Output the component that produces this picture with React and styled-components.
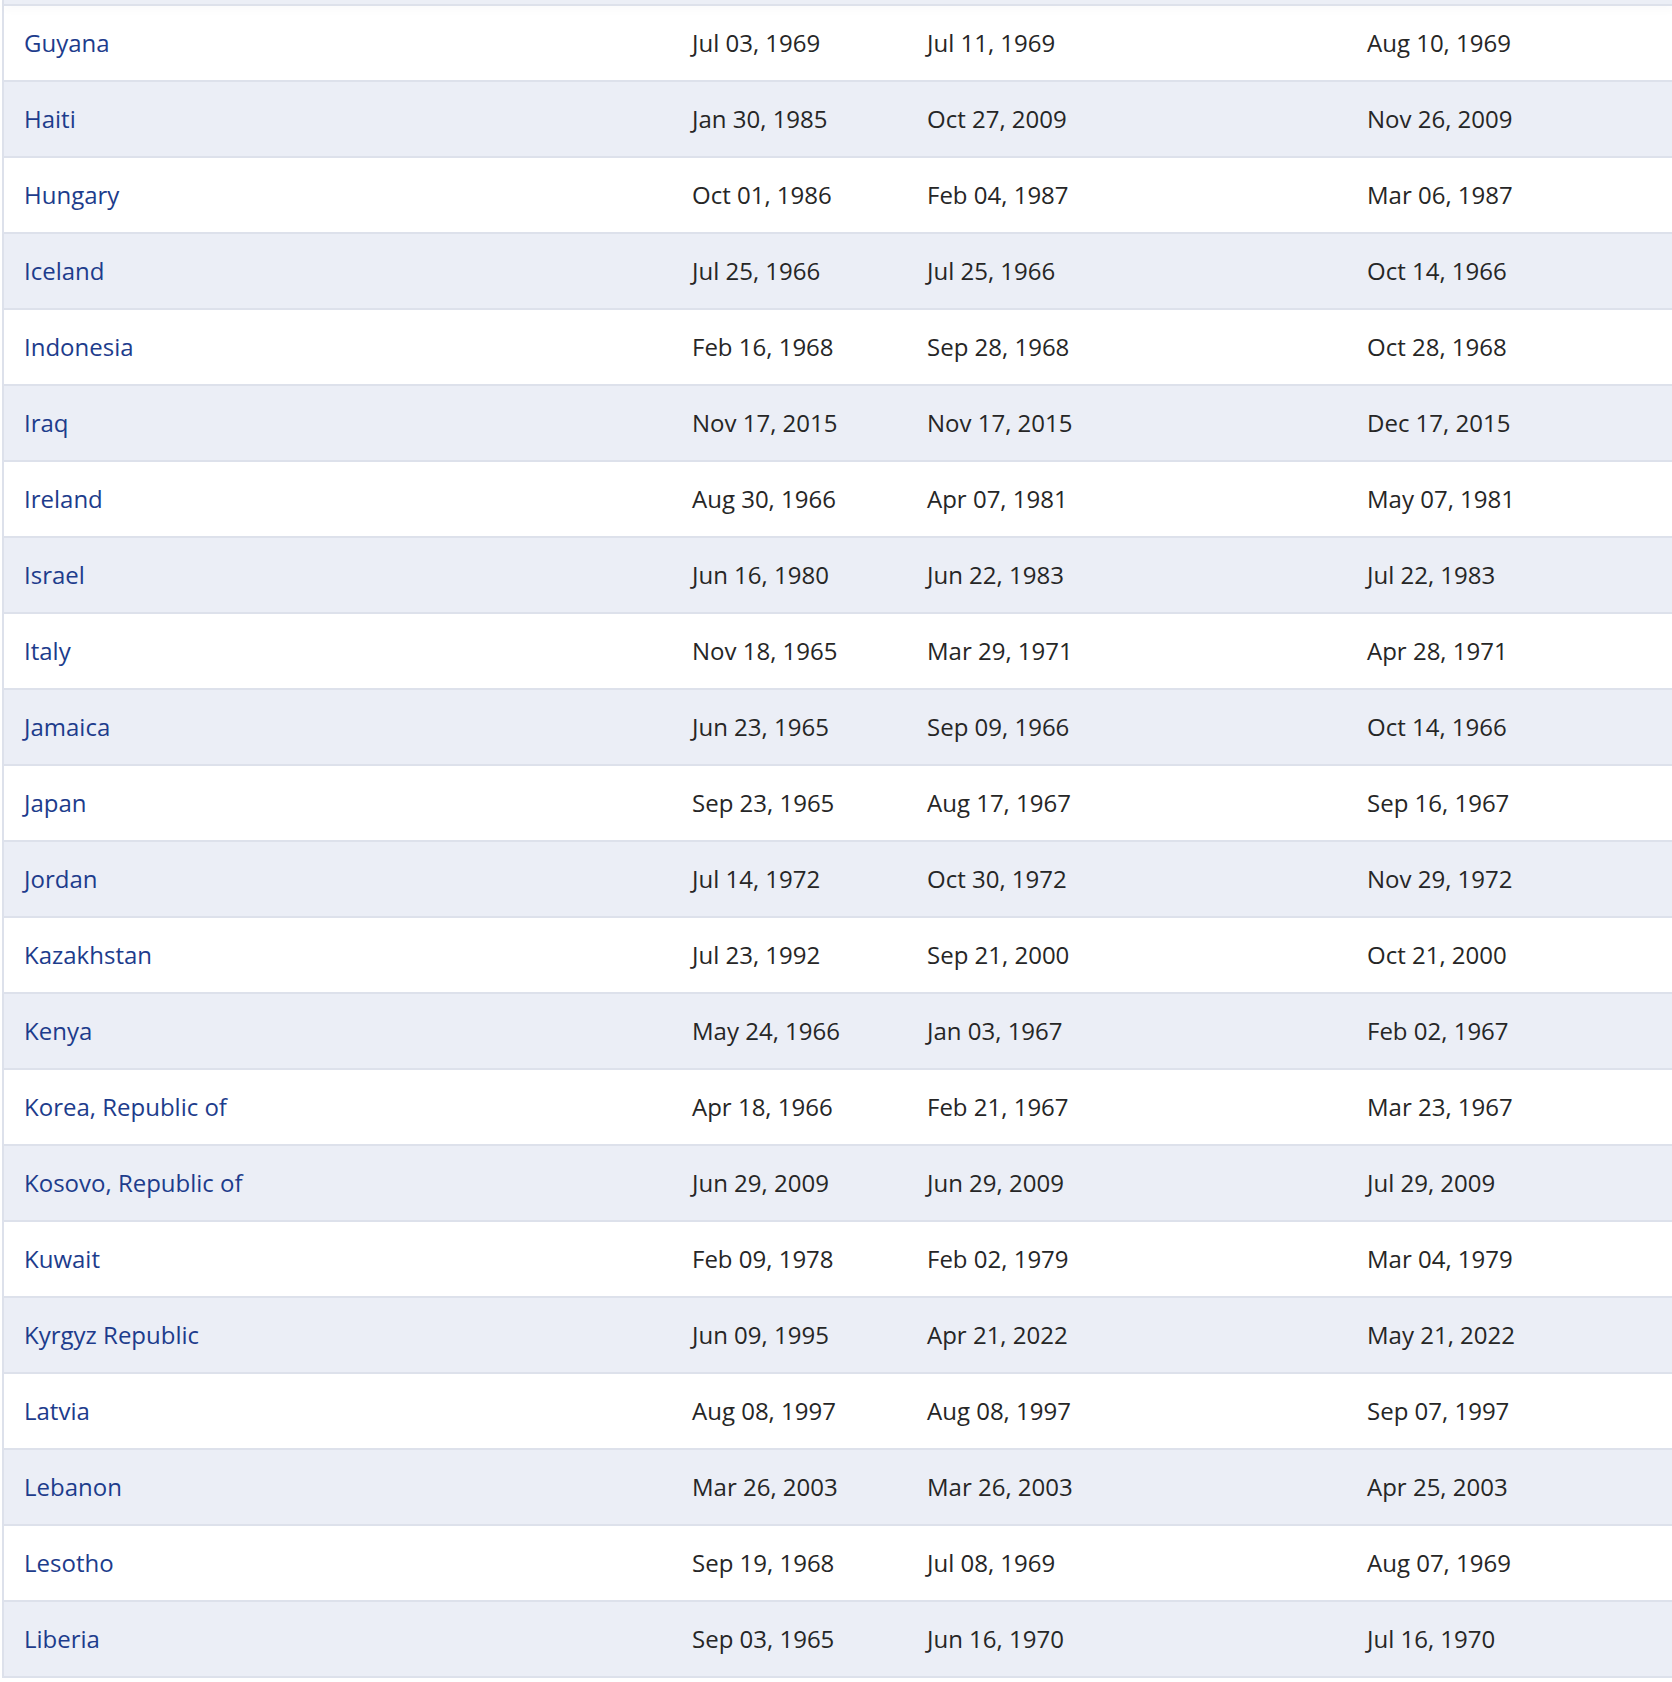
import React from 'react'
import styled, { createGlobalStyle } from 'styled-components'

const GlobalStyle = createGlobalStyle`
  body {
    margin: 0;
    background: #ffffff;
    font-family: 'Open Sans', 'Noto Sans', sans-serif;
  }
`

const borderColor = '#dde1eb'
const stripeColor = '#ebeef6'

const TableWrapper = styled.div`
  padding-left: 2px;
  overflow: hidden;
`

const Table = styled.div`
  border-left: 2px solid ${borderColor};
  width: 100%;
`

const ClippedRow = styled.div`
  height: 4px;
  background-color: ${stripeColor};
  border-bottom: 2px solid ${borderColor};
  box-shadow: 0 3px 10px rgba(30, 40, 80, 0.035);
  position: relative;
  z-index: 1;
`

const Row = styled.div`
  display: grid;
  grid-template-columns: 668px 235px 440px 1fr;
  align-items: center;
  height: 76px;
  padding-bottom: 1px;
  box-sizing: border-box;
  border-bottom: 2px solid ${borderColor};
  background-color: ${(props) => (props.$striped ? stripeColor : '#ffffff')};
`

const Cell = styled.div`
  padding-left: 20px;
  font-size: 24px;
  color: #262626;
  white-space: nowrap;
`

const CountryLink = styled.a`
  color: #1d3c8c;
  text-decoration: none;
  font-size: 24px;
`

const rows = [
  ['Guyana', 'Jul 03, 1969', 'Jul 11, 1969', 'Aug 10, 1969'],
  ['Haiti', 'Jan 30, 1985', 'Oct 27, 2009', 'Nov 26, 2009'],
  ['Hungary', 'Oct 01, 1986', 'Feb 04, 1987', 'Mar 06, 1987'],
  ['Iceland', 'Jul 25, 1966', 'Jul 25, 1966', 'Oct 14, 1966'],
  ['Indonesia', 'Feb 16, 1968', 'Sep 28, 1968', 'Oct 28, 1968'],
  ['Iraq', 'Nov 17, 2015', 'Nov 17, 2015', 'Dec 17, 2015'],
  ['Ireland', 'Aug 30, 1966', 'Apr 07, 1981', 'May 07, 1981'],
  ['Israel', 'Jun 16, 1980', 'Jun 22, 1983', 'Jul 22, 1983'],
  ['Italy', 'Nov 18, 1965', 'Mar 29, 1971', 'Apr 28, 1971'],
  ['Jamaica', 'Jun 23, 1965', 'Sep 09, 1966', 'Oct 14, 1966'],
  ['Japan', 'Sep 23, 1965', 'Aug 17, 1967', 'Sep 16, 1967'],
  ['Jordan', 'Jul 14, 1972', 'Oct 30, 1972', 'Nov 29, 1972'],
  ['Kazakhstan', 'Jul 23, 1992', 'Sep 21, 2000', 'Oct 21, 2000'],
  ['Kenya', 'May 24, 1966', 'Jan 03, 1967', 'Feb 02, 1967'],
  ['Korea, Republic of', 'Apr 18, 1966', 'Feb 21, 1967', 'Mar 23, 1967'],
  ['Kosovo, Republic of', 'Jun 29, 2009', 'Jun 29, 2009', 'Jul 29, 2009'],
  ['Kuwait', 'Feb 09, 1978', 'Feb 02, 1979', 'Mar 04, 1979'],
  ['Kyrgyz Republic', 'Jun 09, 1995', 'Apr 21, 2022', 'May 21, 2022'],
  ['Latvia', 'Aug 08, 1997', 'Aug 08, 1997', 'Sep 07, 1997'],
  ['Lebanon', 'Mar 26, 2003', 'Mar 26, 2003', 'Apr 25, 2003'],
  ['Lesotho', 'Sep 19, 1968', 'Jul 08, 1969', 'Aug 07, 1969'],
  ['Liberia', 'Sep 03, 1965', 'Jun 16, 1970', 'Jul 16, 1970'],
]

const App = () => {
  return (
    <>
      <GlobalStyle />
      <TableWrapper>
        <Table>
          <ClippedRow />
          {rows.map(([country, signed, deposited, inForce], index) => (
            <Row key={country} $striped={index % 2 === 1}>
              <Cell>
                <CountryLink href="#">{country}</CountryLink>
              </Cell>
              <Cell>{signed}</Cell>
              <Cell>{deposited}</Cell>
              <Cell>{inForce}</Cell>
            </Row>
          ))}
        </Table>
      </TableWrapper>
    </>
  )
}

export default App
